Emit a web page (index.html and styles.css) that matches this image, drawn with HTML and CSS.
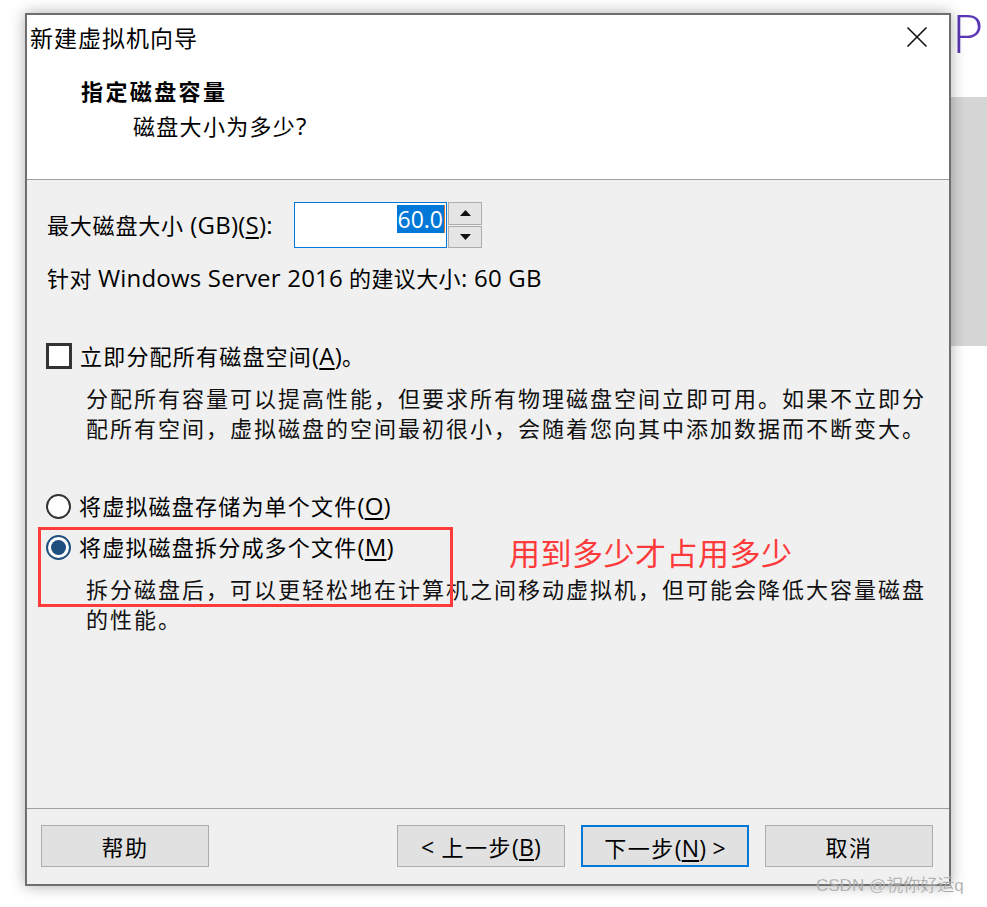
FILE: index.html
```html
<!DOCTYPE html>
<html lang="zh-CN">
<head>
<meta charset="utf-8">
<title>新建虚拟机向导</title>
<link rel="stylesheet" href="styles.css">
</head>
<body>
<div class="desktop">
  <div class="bg-logo">P</div>
  <div class="bg-panel"></div>

  <div class="window">
    <div class="header">
      <div class="titlebar">
        <span class="title">新建虚拟机向导</span>
        <svg class="close" width="22" height="22" viewBox="0 0 22 22"><path d="M1.5 1.5 L20.5 20.5 M20.5 1.5 L1.5 20.5" stroke="#111" stroke-width="1.6" fill="none"/></svg>
      </div>
      <div class="heading">指定磁盘容量</div>
      <div class="subheading">磁盘大小为多少<span class="en">?</span></div>
    </div>

    <div class="content">
      <div class="size-row">
        <span class="size-label">最大磁盘大小 <span class="en">(GB)(<u>S</u>):</span></span>
        <div class="input">
          <span class="sel">60.0</span><span class="caret"></span>
        </div>
        <div class="spinner">
          <div class="spin"><svg width="11" height="6" viewBox="0 0 11 6"><path d="M5.5 0 L11 6 L0 6 Z" fill="#111"/></svg></div>
          <div class="spin"><svg width="11" height="6" viewBox="0 0 11 6"><path d="M0 0 L11 0 L5.5 6 Z" fill="#111"/></svg></div>
        </div>
      </div>
      <div class="line rec">针对 <span class="en">Windows Server 2016</span> 的建议大小<span class="en">: 60 GB</span></div>

      <div class="option opt-check">
        <span class="checkbox"></span>
        <span>立即分配所有磁盘空间<span class="en">(<u>A</u>)</span>。</span>
      </div>
      <div class="desc desc-first">分配所有容量可以提高性能，但要求所有物理磁盘空间立即可用。如果不立即分<br>配所有空间，虚拟磁盘的空间最初很小，会随着您向其中添加数据而不断变大。</div>

      <div class="option opt-radio1">
        <span class="radio"></span>
        <span>将虚拟磁盘存储为单个文件<span class="en">(<u>O</u>)</span></span>
      </div>
      <div class="option opt-radio2">
        <span class="radio checked"></span>
        <span>将虚拟磁盘拆分成多个文件<span class="en">(<u>M</u>)</span></span>
      </div>
      <div class="desc desc-second">拆分磁盘后，可以更轻松地在计算机之间移动虚拟机，但可能会降低大容量磁盘<br>的性能。</div>

      <div class="mark-box"></div>
      <div class="mark-text">用到多少才占用多少</div>
    </div>

    <div class="footer">
      <button class="btn">帮助</button>
      <button class="btn push"><span class="en">&lt;</span> 上一步<span class="en">(<u>B</u>)</span></button>
      <button class="btn default">下一步<span class="en">(<u>N</u>) &gt;</span></button>
      <button class="btn">取消</button>
    </div>
  </div>

  <div class="watermark">CSDN @祝你好运q</div>
</div>
</body>
</html>
```

FILE: styles.css
```css
* { box-sizing: border-box; }

html, body {
  margin: 0;
  padding: 0;
  background: #ffffff;
}

body {
  font-family: "Open Sans", "Noto Sans CJK SC", sans-serif;
  color: #000;
  width: 987px;
  height: 907px;
  overflow: hidden;
}

.en {
  font-size: 24px;
  letter-spacing: 0.2px;
}

.desktop {
  position: relative;
  width: 987px;
  height: 907px;
  padding: 13px 0 0 25px;
}

.bg-logo {
  position: absolute;
  left: 952px;
  top: 5px;
  width: 34px;
  font-family: "Lato", sans-serif;
  font-size: 53px;
  line-height: 56px;
  font-weight: 300;
  color: #5a37b6;
}

.bg-panel {
  position: absolute;
  left: 951px;
  top: 97px;
  width: 36px;
  height: 249px;
  background: #d6d6d6;
}

.window {
  position: relative;
  width: 926px;
  height: 873px;
  border: 2px solid #6f6f6f;
  background: #f0f0f0;
  box-shadow: 0 0 14px rgba(0, 0, 0, 0.32);
  display: flex;
  flex-direction: column;
  z-index: 1;
}

/* header */
.header {
  height: 165px;
  background: #ffffff;
  border-bottom: 1px solid #a0a0a0;
  letter-spacing: 0.3px;
}

.titlebar {
  height: 46px;
  display: flex;
  align-items: center;
  justify-content: space-between;
  padding: 0 21px 0 3px;
}

.title {
  font-size: 23px;
  line-height: 46px;
  letter-spacing: 1px;
}

.close {
  display: block;
  margin-top: -2px;
}

.heading {
  margin-top: 15px;
  padding-left: 54px;
  font-size: 22px;
  line-height: 30px;
  font-weight: 700;
  letter-spacing: 2.4px;
}

.subheading {
  margin-top: 5px;
  padding-left: 106px;
  font-size: 22px;
  line-height: 30px;
  letter-spacing: 1.3px;
}

/* content */
.content {
  position: relative;
  flex: 1;
  padding: 22px 0 0 20px;
  font-size: 22px;
  letter-spacing: 1.2px;
  border-bottom: 1px solid #a0a0a0;
}

.size-row {
  display: flex;
  align-items: center;
  height: 46px;
}

.size-label {
  width: 247px;
  line-height: 30px;
  letter-spacing: 0.8px;
  white-space: nowrap;
}

.input {
  width: 153px;
  height: 46px;
  border: 1px solid #0078d7;
  background: #fff;
  display: flex;
  align-items: flex-start;
  justify-content: flex-end;
  padding: 2px 1px 0 0;
}

.sel {
  background: #0078d7;
  color: #fff;
  font-size: 23px;
  line-height: 28px;
  height: 28px;
  letter-spacing: 0;
  padding: 0 1px;
}

.caret {
  width: 1px;
  height: 28px;
  background: #e0742a;
}

.spinner {
  margin-left: 1px;
  width: 34px;
  height: 46px;
  display: flex;
  flex-direction: column;
  gap: 1px;
}

.spin {
  flex: 1;
  background: #e5e5e5;
  border: 1px solid #adadad;
  display: flex;
  align-items: center;
  justify-content: center;
}

.spin svg { display: block; }

.line {
  line-height: 30px;
}

.rec {
  margin-top: 15px;
  letter-spacing: 0.4px;
}

.option {
  display: flex;
  align-items: center;
  height: 30px;
  line-height: 30px;
  margin-left: -1px;
}

.opt-check { margin-top: 48px; }
.opt-radio1 { margin-top: 48px; }
.opt-radio2 { margin-top: 11px; }

.checkbox {
  width: 26px;
  height: 26px;
  border: 3px solid #333;
  background: #fff;
  margin-right: 8px;
  flex: none;
}

.radio {
  width: 25px;
  height: 25px;
  border: 2px solid #333;
  border-radius: 50%;
  background: #fff;
  margin-right: 8px;
  flex: none;
  position: relative;
}

.radio.checked {
  border-color: #1f4f7d;
}

.radio.checked::after {
  content: "";
  position: absolute;
  left: 3px;
  top: 3px;
  width: 15px;
  height: 15px;
  border-radius: 50%;
  background: #1f4f7d;
}

.desc {
  padding-left: 39px;
  line-height: 30px;
  letter-spacing: 2px;
  color: #111;
  white-space: nowrap;
}

.desc-first { margin-top: 12px; }
.desc-second { margin-top: 12px; }

.mark-box {
  position: absolute;
  left: 11px;
  top: 347px;
  width: 415px;
  height: 80px;
  border: 3px solid #ff3a3a;
}

.mark-text {
  position: absolute;
  left: 482px;
  top: 353px;
  font-size: 31px;
  line-height: 40px;
  letter-spacing: 0.5px;
  color: #ff3a3a;
}

/* footer */
.footer {
  display: flex;
  align-items: flex-start;
  gap: 16px;
  padding: 16px 16px 0 14px;
  height: 75px;
}

.btn {
  width: 168px;
  height: 42px;
  background: #e1e1e1;
  border: 1px solid #adadad;
  font-family: "Open Sans", "Noto Sans CJK SC", sans-serif;
  font-size: 22px;
  letter-spacing: 1.5px;
  color: #000;
  padding: 2px 0 0;
  line-height: 38px;
}

.btn .en { font-size: 23px; }

.btn.push { margin-left: auto; }

.btn.default {
  border: 2px solid #0078d7;
}

u {
  text-decoration-thickness: 1.5px;
  text-underline-offset: 3px;
}

.watermark {
  position: absolute;
  left: 816px;
  top: 874px;
  z-index: 2;
  font-family: "Liberation Sans", "Noto Sans CJK SC", sans-serif;
  font-size: 17px;
  line-height: 24px;
  color: rgba(150, 150, 150, 0.85);
  -webkit-text-stroke: 0.3px rgba(255, 255, 255, 0.6);
}
```
